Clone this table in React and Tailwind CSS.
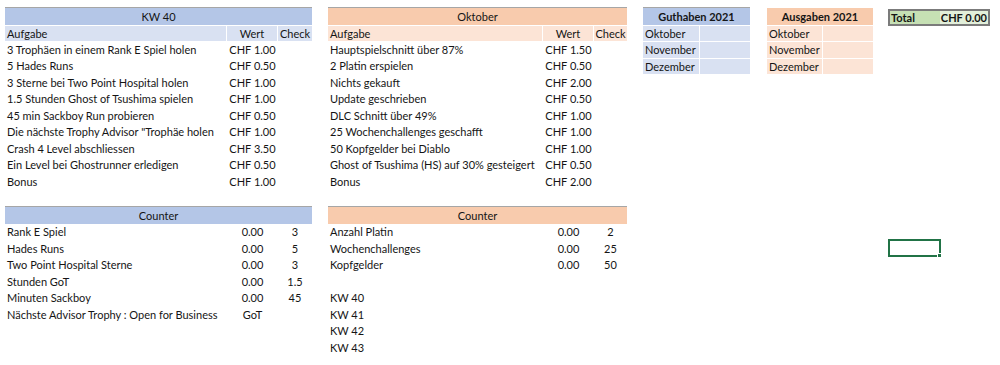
import React from "react";

const BLUE_H = "bg-[#b4c6e7]";
const BLUE_L = "bg-[#d9e1f2]";
const OR_H = "bg-[#f8cbad]";
const OR_L = "bg-[#fce4d6]";

const kwRows = [
  ["3 Trophäen in einem Rank E Spiel holen", "CHF 1.00"],
  ["5 Hades Runs", "CHF 0.50"],
  ["3 Sterne bei Two Point Hospital holen", "CHF 1.00"],
  ["1.5 Stunden Ghost of Tsushima spielen", "CHF 1.00"],
  ["45 min Sackboy Run probieren", "CHF 0.50"],
  ['Die nächste Trophy Advisor "Trophäe holen', "CHF 1.00"],
  ["Crash 4 Level abschliessen", "CHF 3.50"],
  ["Ein Level bei Ghostrunner erledigen", "CHF 0.50"],
  ["Bonus", "CHF 1.00"],
];

const oktRows = [
  ["Hauptspielschnitt über 87%", "CHF 1.50"],
  ["2 Platin erspielen", "CHF 0.50"],
  ["Nichts gekauft", "CHF 2.00"],
  ["Update geschrieben", "CHF 0.50"],
  ["DLC Schnitt über 49%", "CHF 1.00"],
  ["25 Wochenchallenges geschafft", "CHF 1.00"],
  ["50 Kopfgelder bei Diablo", "CHF 1.00"],
  ["Ghost of Tsushima (HS) auf 30% gesteigert", "CHF 0.50"],
  ["Bonus", "CHF 2.00"],
];

const counterL = [
  ["Rank E Spiel", "0.00", "3"],
  ["Hades Runs", "0.00", "5"],
  ["Two Point Hospital Sterne", "0.00", "3"],
  ["Stunden GoT", "0.00", "1.5"],
  ["Minuten Sackboy", "0.00", "45"],
  ["Nächste Advisor Trophy : Open for Business", "GoT", ""],
];

const counterR = [
  ["Anzahl Platin", "0.00", "2"],
  ["Wochenchallenges", "0.00", "25"],
  ["Kopfgelder", "0.00", "50"],
];

function Row({ children, className = "" }) {
  return <div className={"flex h-[16.5px] shrink-0 items-center " + className}>{children}</div>;
}

function Table({ title, head, light, w, rows }) {
  return (
    <div className="flex flex-col">
      <div className={"flex h-[17.5px] shrink-0 items-center justify-center border-t border-[#a6a6a6] " + head}>
        {title}
      </div>
      <div className="flex h-[16.5px] shrink-0 gap-px pt-px">
        <div className={"flex items-center pl-[2px] " + light} style={{ width: w[0] - 1 }}>Aufgabe</div>
        <div className={"flex items-center justify-center " + light} style={{ width: w[1] - 1 }}>Wert</div>
        <div className={"flex flex-1 items-center justify-center " + light}>Check</div>
      </div>
      {rows.map(([a, b], i) => (
        <Row key={i}>
          <div className="whitespace-nowrap pl-[2px]" style={{ width: w[0] }}>{a}</div>
          <div className="text-center whitespace-nowrap" style={{ width: w[1] }}>{b}</div>
        </Row>
      ))}
    </div>
  );
}

function Counter({ head, w, rows }) {
  return (
    <div className="flex flex-col">
      <div className={"flex h-[17.5px] shrink-0 items-center justify-center border-t border-[#a6a6a6] " + head}>
        Counter
      </div>
      {rows.map(([a, b, c], i) => (
        <Row key={i}>
          <div className="whitespace-nowrap pl-[2px]" style={{ width: w[0] }}>{a}</div>
          <div className="text-center whitespace-nowrap" style={{ width: w[1] }}>{b}</div>
          <div className="text-center whitespace-nowrap" style={{ width: w[2] }}>{c}</div>
        </Row>
      ))}
    </div>
  );
}

function Months({ title, head, light, w1, w2, line }) {
  return (
    <div className="flex flex-col">
      <div
        className={
          "flex h-[17.5px] shrink-0 items-center justify-center font-bold " +
          head +
          (line ? " border-t border-[#a6a6a6]" : " border-t border-white")
        }
      >
        {title}
      </div>
      {["Oktober", "November", "Dezember"].map((m) => (
        <div key={m} className="flex h-[16.5px] shrink-0 gap-px pt-px">
          <div className={"flex items-center pl-[2px] " + light} style={{ width: w1 - 1 }}>{m}</div>
          <div className={light} style={{ width: w2 }} />
        </div>
      ))}
    </div>
  );
}

export default function App() {
  return (
    <div
      className="flex h-[365px] w-[1000px] overflow-hidden bg-white pt-[7px] text-[11px] leading-none text-[#151515]"
      style={{ fontFamily: "Lato, 'Liberation Sans', sans-serif" }}
    >
      <div className="ml-[5px] flex w-[307px] flex-col">
        <Table title="KW 40" head={BLUE_H} light={BLUE_L} w={[222, 51, 34]} rows={kwRows} />
        <div className="h-[16.5px] shrink-0" />
        <Counter head={BLUE_H} w={[222, 51, 34]} rows={counterL} />
      </div>

      <div className="ml-[16px] flex w-[299px] flex-col">
        <Table title="Oktober" head={OR_H} light={OR_L} w={[215, 51, 33]} rows={oktRows} />
        <div className="h-[16.5px] shrink-0" />
        <Counter head={OR_H} w={[215, 51, 33]} rows={counterR} />
        <div className="h-[16.5px] shrink-0" />
        {["KW 40", "KW 41", "KW 42", "KW 43"].map((k) => (
          <Row key={k}>
            <div className="pl-[2px]">{k}</div>
          </Row>
        ))}
      </div>

      <div className="ml-[16px] flex w-[107px] flex-col">
        <Months title="Guthaben 2021" head={BLUE_H} light={BLUE_L} w1={57} w2={50} line />
      </div>

      <div className="ml-[17px] flex w-[106px] flex-col">
        <Months title="Ausgaben 2021" head={OR_H} light={OR_L} w1={56} w2={50} />
      </div>

      <div className="ml-[15px] flex w-[102px] flex-col">
        <div className="mt-[2px] flex h-[17px] shrink-0 border-2 border-[#7b7b7b] font-bold">
          <div className="flex w-[50px] items-center bg-[#c6e0b4] pl-[1px]">Total</div>
          <div className="flex flex-1 items-center justify-end bg-[#e2efda] pr-[1px]">CHF 0.00</div>
        </div>
        <div className="h-[213px] shrink-0" />
        <div className="relative h-[18px] w-[53px] shrink-0 border-2 border-[#217346]">
          <div className="absolute -right-[3px] -bottom-[3px] h-[5px] w-[5px] border border-white bg-[#217346]" />
        </div>
      </div>
    </div>
  );
}
